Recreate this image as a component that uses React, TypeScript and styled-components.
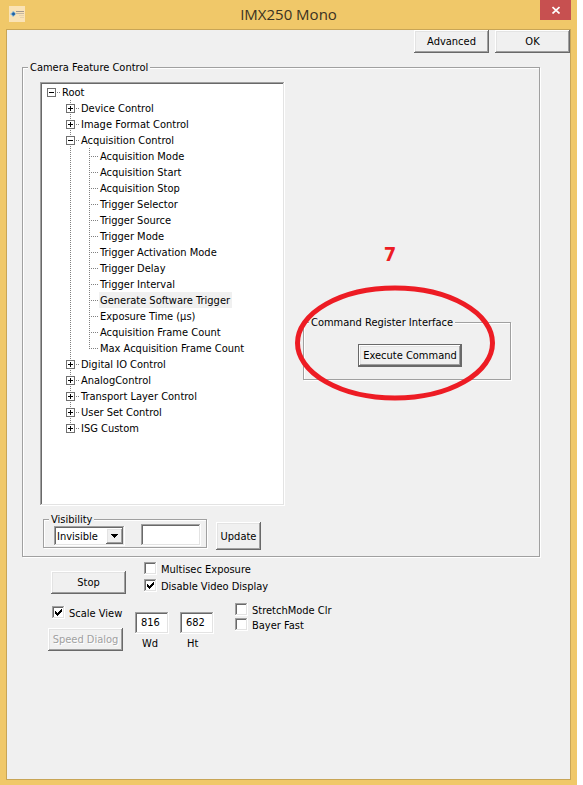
import React, { useState } from "react";
import styled, { createGlobalStyle, css } from "styled-components";

const face = "#f0f0f0";
const edgeLight = "#ffffff";
const edgeSoft = "#e3e3e3";
const edgeMid = "#a0a0a0";
const edgeDark = "#696969";
const markRed = "#ed1c24";

const raised = css`
  border: 0;
  box-shadow: inset -1px -1px ${edgeDark}, inset 1px 1px ${edgeLight},
    inset -2px -2px ${edgeMid}, inset 2px 2px ${edgeSoft};
`;

const sunken = css`
  border: 0;
  box-shadow: inset -1px -1px ${edgeLight}, inset 1px 1px ${edgeMid},
    inset -2px -2px ${edgeSoft}, inset 2px 2px ${edgeDark};
`;

const GlobalStyle = createGlobalStyle`
  *, *::before, *::after { box-sizing: border-box; }
  body {
    margin: 0;
    background: #ffffff;
    color: #000000;
    font: 11px/15px "DejaVu Sans Condensed", "DejaVu Sans", sans-serif;
  }
  button, input, select { font: inherit; color: inherit; }
`;

const Window = styled.div`
  display: flex;
  flex-direction: column;
  min-height: 100vh;
  margin-right: 6px;
  padding: 0 6px 5px;
  background: #f0c869;
`;

const TitleBar = styled.header`
  display: grid;
  grid-template-columns: 31px 1fr 31px;
  align-items: start;
  height: 29px;
`;

const AppIcon = styled.svg`
  margin: 6px 0 0 3px;
`;

const Title = styled.h1`
  margin: 0;
  color: #3a3222;
  font: 15px/29px "Open Sans", "Noto Sans", sans-serif;
  text-align: center;
`;

const CloseButton = styled.button`
  display: grid;
  place-items: center;
  width: 31px;
  height: 20px;
  padding: 0;
  border: 0;
  background: #c75050;
`;

const Client = styled.main`
  flex: 1;
  border: 1px solid #c8a556;
  background: ${face};
`;

const DialogButtons = styled.div`
  display: flex;
  justify-content: flex-end;
  gap: 6px;
`;

const Button = styled.button<{ $width?: number; $height?: number; $default?: boolean }>`
  ${raised}
  flex: none;
  width: ${(p) => p.$width ?? 75}px;
  height: ${(p) => p.$height ?? 23}px;
  padding: 0;
  background: ${face};
  white-space: nowrap;
  ${(p) =>
    p.$default &&
    css`
      border: 1px solid ${edgeDark};
    `}
  &:disabled {
    color: ${edgeMid};
    text-shadow: 1px 1px ${edgeLight};
  }
`;

const Group = styled.fieldset`
  min-width: 0;
  margin: 0;
  padding: 0 5px;
  border: 1px solid ${edgeMid};
  box-shadow: 1px 1px ${edgeLight}, inset 1px 1px ${edgeLight};
`;

const Legend = styled.legend`
  padding: 0 2px;
  background: ${face};
`;

const FeatureGroup = styled(Group)`
  margin: 7px 30px 0 15px;
`;

const FeatureBody = styled.div`
  display: flex;
  padding: 7px 0 6px 12px;
`;

const FeatureColumn = styled.div`
  display: flex;
  flex: none;
  flex-direction: column;
  gap: 6px;
  width: 245px;
`;

const Tree = styled.div`
  ${sunken}
  min-height: 424px;
  padding: 2px;
  background: #ffffff;
`;

const TreeRow = styled.div`
  display: flex;
  height: 16px;
`;

const dotsDown = "repeating-linear-gradient(to bottom, #808080 0 1px, transparent 1px 2px)";
const dotsRight = "repeating-linear-gradient(to right, #808080 0 1px, transparent 1px 2px)";

const Rail = styled.span<{ $vertical: "none" | "full" | "half"; $branch?: boolean }>`
  display: grid;
  flex: none;
  width: 19px;
  height: 16px;
  padding: 4px 5px 3px;
  background-image: ${dotsDown}, ${dotsRight};
  background-repeat: no-repeat;
  background-position: 9px 0, 9px 8px;
  background-size: ${(p) =>
      p.$vertical === "none" ? "0 0" : p.$vertical === "half" ? "1px 9px" : "1px 16px"},
    ${(p) => (p.$branch ? "9px 1px" : "0 0")};
`;

const Expander = styled.button`
  display: block;
  width: 9px;
  height: 9px;
  padding: 0;
  border: 0;
  background: #ffffff;
  line-height: 0;
`;

const TreeLabel = styled.span<{ $selected?: boolean }>`
  padding: 1px 2px 0 1px;
  background: ${(p) => (p.$selected ? face : "transparent")};
  white-space: nowrap;
`;

const VisibilityRow = styled.div`
  display: flex;
  align-items: flex-start;
  gap: 9px;
  padding-left: 3px;
`;

const VisibilityGroup = styled(Group)`
  flex: none;
  width: 164px;
`;

const VisibilityFields = styled.div`
  display: flex;
  align-items: flex-end;
  gap: 16px;
  margin-top: -3px;
  padding: 0 0 1px 5px;
`;

const UpdateSlot = styled.div`
  display: flex;
  padding-top: 10px;
`;

const ComboBox = styled.span`
  ${sunken}
  display: grid;
  grid-template-columns: 1fr 17px;
  width: 71px;
  height: 20px;
  padding: 2px;
  background: #ffffff;
`;

const ComboSelect = styled.select`
  grid-area: 1 / 1 / 2 / 3;
  appearance: none;
  padding: 1px 0 0 1px;
  border: 0;
  background: transparent;
`;

const ComboArrow = styled.span`
  ${raised}
  display: grid;
  grid-area: 1 / 2;
  place-items: center;
  background: ${face};
  pointer-events: none;
`;

const TextBox = styled.input<{ $width: number }>`
  ${sunken}
  width: ${(p) => p.$width}px;
  height: 22px;
  padding: 0 6px 1px;
  background: #ffffff;
`;

const CommandPane = styled.div`
  flex: 1;
  padding: 233px 23px 0 18px;
`;

const CommandHolder = styled.div`
  position: relative;
`;

const CommandBody = styled.div`
  display: flex;
  justify-content: center;
  padding: 14px 0 12px 6px;
`;

const Callout = styled.div`
  position: absolute;
  top: -74px;
  left: -8px;
  display: grid;
  row-gap: 18px;
  pointer-events: none;
`;

const CalloutNumber = styled.strong`
  padding-right: 10px;
  color: ${markRed};
  font: bold 20px/26px "DejaVu Sans Condensed", "DejaVu Sans", sans-serif;
  text-align: center;
`;

const CalloutRing = styled.svg`
  display: block;
`;

const Controls = styled.section`
  display: grid;
  row-gap: 9px;
  padding: 5px 0 0 41px;
`;

const VideoRow = styled.div`
  display: flex;
  gap: 18px;
  padding-left: 3px;
`;

const StopSlot = styled.div`
  display: flex;
  padding-top: 9px;
`;

const CheckList = styled.div<{ $gap: number }>`
  display: flex;
  flex-direction: column;
  gap: ${(p) => p.$gap}px;
`;

const CheckLabel = styled.label`
  display: grid;
  grid-template-columns: 13px auto;
  column-gap: 4px;
  height: 13px;
  white-space: nowrap;
`;

const CheckInput = styled.input`
  ${sunken}
  grid-area: 1 / 1;
  appearance: none;
  width: 13px;
  height: 13px;
  margin: 0;
  background: #ffffff;
  & + svg {
    grid-area: 1 / 1;
    visibility: hidden;
    pointer-events: none;
  }
  &:checked + svg {
    visibility: visible;
  }
`;

const ViewRow = styled.div`
  display: flex;
  align-items: flex-start;
`;

const ScaleColumn = styled.div`
  display: grid;
  row-gap: 9px;
  padding-top: 3px;
`;

const ScaleSlot = styled.div`
  padding-left: 4px;
`;

const SizeFields = styled.div`
  display: flex;
  gap: 11px;
  padding: 9px 21px 0 12px;
`;

const SizeField = styled.label`
  display: flex;
  flex-direction: column-reverse;
  gap: 2px;
  width: 34px;
`;

const SizeCaption = styled.span`
  padding-left: 7px;
`;

type Node = { label: string; children?: Node[] };

const featureTree: Node = {
  label: "Root",
  children: [
    { label: "Device Control", children: [] },
    { label: "Image Format Control", children: [] },
    {
      label: "Acquisition Control",
      children: [
        "Acquisition Mode",
        "Acquisition Start",
        "Acquisition Stop",
        "Trigger Selector",
        "Trigger Source",
        "Trigger Mode",
        "Trigger Activation Mode",
        "Trigger Delay",
        "Trigger Interval",
        "Generate Software Trigger",
        "Exposure Time (µs)",
        "Acquisition Frame Count",
        "Max Acquisition Frame Count",
      ].map((label) => ({ label })),
    },
    { label: "Digital IO Control", children: [] },
    { label: "AnalogControl", children: [] },
    { label: "Transport Layer Control", children: [] },
    { label: "User Set Control", children: [] },
    { label: "ISG Custom", children: [] },
  ],
};

type BranchProps = {
  node: Node;
  rails: boolean[];
  last: boolean;
  open: Set<string>;
  selected: string;
  onToggle: (label: string) => void;
  onSelect: (label: string) => void;
};

function Branch({ node, rails, last, open, selected, onToggle, onSelect }: BranchProps) {
  const isOpen = open.has(node.label);
  const depth = rails.length;
  return (
    <>
      <TreeRow role="treeitem" aria-level={depth + 1} aria-selected={node.label === selected}>
        {rails.map((line, i) => (
          <Rail key={i} $vertical={line ? "full" : "none"} />
        ))}
        <Rail $vertical={depth === 0 ? "none" : last ? "half" : "full"} $branch>
          {node.children && (
            <Expander
              type="button"
              aria-label={`Toggle ${node.label}`}
              aria-expanded={isOpen}
              onClick={() => onToggle(node.label)}
            >
              <svg width="9" height="9" viewBox="0 0 9 9" fill="none" shapeRendering="crispEdges">
                <rect x="0.5" y="0.5" width="8" height="8" stroke="#707070" />
                <path d={isOpen ? "M2 4.5h5" : "M2 4.5h5M4.5 2v5"} stroke="#000000" />
              </svg>
            </Expander>
          )}
        </Rail>
        <TreeLabel $selected={node.label === selected} onClick={() => onSelect(node.label)}>
          {node.label}
        </TreeLabel>
      </TreeRow>
      {isOpen &&
        node.children?.map((child, i, all) => (
          <Branch
            key={child.label}
            node={child}
            rails={[...rails, depth > 0 && !last]}
            last={i === all.length - 1}
            open={open}
            selected={selected}
            onToggle={onToggle}
            onSelect={onSelect}
          />
        ))}
    </>
  );
}

function CheckBox({ label, checked = false }: { label: string; checked?: boolean }) {
  return (
    <CheckLabel>
      <CheckInput type="checkbox" defaultChecked={checked} />
      <svg width="13" height="13" viewBox="0 0 13 13" aria-hidden="true" shapeRendering="crispEdges">
        <path d="M3 5h1v1h1v1h1v-1h1v-1h1v-1h1v-1h1v3h-1v1h-1v1h-1v1h-1v1h-1v-1h-1v-1h-1z" />
      </svg>
      {label}
    </CheckLabel>
  );
}

export default function App() {
  const [open, setOpen] = useState(() => new Set(["Root", "Acquisition Control"]));
  const [selected, setSelected] = useState("Generate Software Trigger");

  const toggle = (label: string) =>
    setOpen((current) => {
      const next = new Set(current);
      if (!next.delete(label)) next.add(label);
      return next;
    });

  return (
    <>
      <GlobalStyle />
      <Window>
        <TitleBar>
          <AppIcon width="16" height="16" viewBox="0 0 16 16" aria-hidden="true">
            <rect width="16" height="16" fill="#fae3b6" />
            <path d="M1 8l2-1.5L4 5l1.500 1L7 8l-1.500 1.500L4 11 3 9.500z" fill="#7fb0d4" />
            <path d="M3 8h3M4.500 6.500v3" stroke="#1d5fa0" strokeWidth="1.300" />
            <path d="M7 5.500h8" stroke="#a3988c" />
            <path d="M7 7.500h8" stroke="#c4b6a0" />
            <path d="M10 9.500h5M11 11.500h4" stroke="#e6d2ac" />
          </AppIcon>
          <Title>IMX250 Mono</Title>
          <CloseButton type="button" aria-label="Close">
            <svg width="8" height="8" viewBox="0 0 8 8" aria-hidden="true">
              <path d="M0.5 1l7 6.5M7.5 1l-7 6.5" stroke="#ffffff" strokeWidth="1.7" />
            </svg>
          </CloseButton>
        </TitleBar>

        <Client>
          <DialogButtons>
            <Button type="button">Advanced</Button>
            <Button type="button">OK</Button>
          </DialogButtons>

          <FeatureGroup>
            <Legend>Camera Feature Control</Legend>
            <FeatureBody>
              <FeatureColumn>
                <Tree role="tree" aria-label="Camera features">
                  <Branch
                    node={featureTree}
                    rails={[]}
                    last
                    open={open}
                    selected={selected}
                    onToggle={toggle}
                    onSelect={setSelected}
                  />
                </Tree>
                <VisibilityRow>
                  <VisibilityGroup>
                    <Legend>Visibility</Legend>
                    <VisibilityFields>
                      <ComboBox>
                        <ComboSelect aria-label="Visibility" defaultValue="Invisible">
                          <option>Invisible</option>
                        </ComboSelect>
                        <ComboArrow>
                          <svg width="7" height="4" viewBox="0 0 7 4" shapeRendering="crispEdges">
                            <path d="M0 0h7v1h-1v1h-1v1h-1v1h-1v-1h-1v-1h-1v-1h-1z" />
                          </svg>
                        </ComboArrow>
                      </ComboBox>
                      <TextBox $width={60} aria-label="Feature value" />
                    </VisibilityFields>
                  </VisibilityGroup>
                  <UpdateSlot>
                    <Button type="button" $width={45} $height={28}>
                      Update
                    </Button>
                  </UpdateSlot>
                </VisibilityRow>
              </FeatureColumn>

              <CommandPane>
                <CommandHolder>
                  <Group>
                    <Legend>Command Register Interface</Legend>
                    <CommandBody>
                      <Button type="button" $width={104} $default>
                        Execute Command
                      </Button>
                    </CommandBody>
                  </Group>
                  <Callout>
                    <CalloutNumber>7</CalloutNumber>
                    <CalloutRing width="200" height="116" viewBox="0 0 200 116" aria-hidden="true">
                      <ellipse
                        cx="100"
                        cy="58"
                        rx="97.5"
                        ry="55"
                        fill="none"
                        stroke={markRed}
                        strokeWidth="5"
                      />
                    </CalloutRing>
                  </Callout>
                </CommandHolder>
              </CommandPane>
            </FeatureBody>
          </FeatureGroup>

          <Controls>
            <VideoRow>
              <StopSlot>
                <Button type="button">Stop</Button>
              </StopSlot>
              <CheckList $gap={4}>
                <CheckBox label="Multisec Exposure" />
                <CheckBox label="Disable Video Display" checked />
              </CheckList>
            </VideoRow>
            <ViewRow>
              <ScaleColumn>
                <ScaleSlot>
                  <CheckBox label="Scale View" checked />
                </ScaleSlot>
                <Button type="button" disabled>
                  Speed Dialog
                </Button>
              </ScaleColumn>
              <SizeFields>
                <SizeField>
                  <SizeCaption>Wd</SizeCaption>
                  <TextBox $width={34} defaultValue="816" />
                </SizeField>
                <SizeField>
                  <SizeCaption>Ht</SizeCaption>
                  <TextBox $width={34} defaultValue="682" />
                </SizeField>
              </SizeFields>
              <CheckList $gap={2}>
                <CheckBox label="StretchMode Clr" />
                <CheckBox label="Bayer Fast" />
              </CheckList>
            </ViewRow>
          </Controls>
        </Client>
      </Window>
    </>
  );
}
